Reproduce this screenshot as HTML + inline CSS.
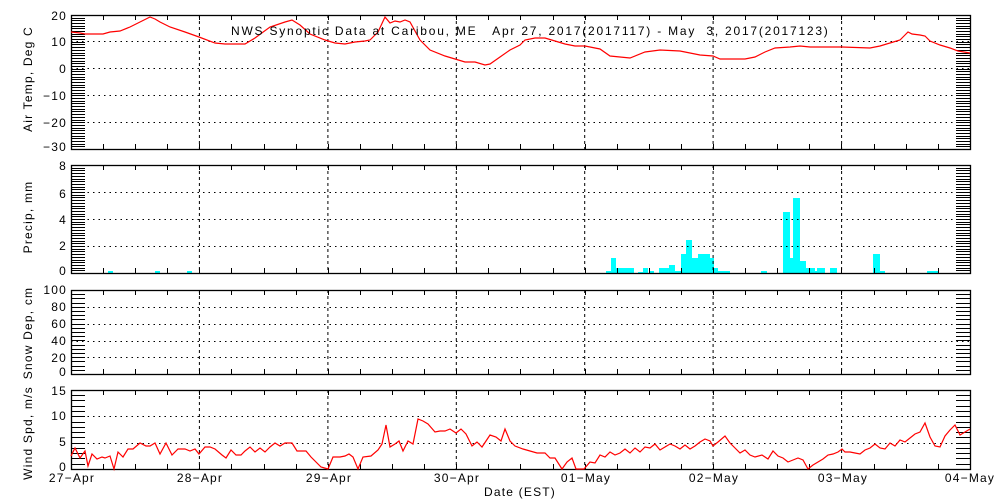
<!DOCTYPE html>
<html><head><meta charset="utf-8"><style>
html,body{margin:0;padding:0;background:#fff;width:1000px;height:500px;overflow:hidden}
svg{display:block}
text{font-family:"Liberation Sans",sans-serif;font-size:12px;fill:#000;letter-spacing:1.2px}
</style></head><body>
<svg id="s" width="1000" height="500" xmlns="http://www.w3.org/2000/svg">
<g id="g"></g>
<text x="231" y="35" xml:space="preserve" font-size="13" textLength="598" lengthAdjust="spacing">NWS Synoptic Data at Caribou, ME   Apr 27, 2017(2017117) - May  3, 2017(2017123)</text>
<g text-anchor="end">
<text x="67" y="20">20</text><text x="67" y="46">10</text><text x="67" y="73">0</text><text x="67" y="100">−10</text><text x="67" y="127">−20</text><text x="67" y="151">−30</text>
<text x="67" y="170">8</text><text x="67" y="198">6</text><text x="67" y="224">4</text><text x="67" y="250">2</text><text x="67" y="275">0</text>
<text x="67" y="294">100</text><text x="67" y="311">80</text><text x="67" y="328">60</text><text x="67" y="345">40</text><text x="67" y="362">20</text><text x="67" y="376">0</text>
<text x="67" y="395">15</text><text x="67" y="420">10</text><text x="67" y="446">5</text><text x="67" y="471">0</text>
</g>
<g text-anchor="middle">
<text x="72" y="482">27−Apr</text><text x="200" y="482">28−Apr</text><text x="329" y="482">29−Apr</text><text x="457" y="482">30−Apr</text><text x="586" y="482">01−May</text><text x="714" y="482">02−May</text><text x="843" y="482">03−May</text><text x="970" y="482">04−May</text>
<text x="520" y="496">Date (EST)</text>
<text transform="translate(32,79) rotate(-90)" letter-spacing="2">Air Temp, Deg C</text>
<text transform="translate(32,217) rotate(-90)" letter-spacing="2">Precip, mm</text>
<text transform="translate(32,333) rotate(-90)" letter-spacing="2">Snow Dep, cm</text>
<text transform="translate(32,433) rotate(-90)" letter-spacing="2">Wind Spd, m/s</text>
</g>
</svg>
<script>
var g=document.getElementById('g'),h='';
function L(x1,y1,x2,y2,extra){h+='<line x1="'+x1+'" y1="'+y1+'" x2="'+x2+'" y2="'+y2+'" stroke="#000" stroke-width="1" '+(extra||'')+'/>';}
var days=[71,199.4,327.9,456.3,584.7,713.1,841.6,970];
function panel(top,bot,minorStep,majors){
  majors.forEach(function(y){L(71,y,970,y,'stroke-dasharray="1.5,4"');});
  for(var i=1;i<7;i++)L(days[i],top,days[i],bot,'stroke-dasharray="3,3"');
  for(var y=bot;y>=top-0.5;y-=minorStep){var yy=Math.round(y)+0.5;L(71,yy,85,yy);L(956,yy,970,yy);}
  for(var x=71;x<=970;x+=32.1){var xx=Math.round(x)+0.5;L(xx,top,xx,top+5);L(xx,bot,xx,bot-5);}
  h+='<rect x="71.5" y="'+(top+0.5)+'" width="899" height="'+(bot-top)+'" fill="none" stroke="#000" stroke-width="1.3"/>';
}
panel(15,149,2.68,[41.5,68.5,95.5,122.5]);
var bars=[[108,113,271],[155,160,271],[187,192,271],[606,611,271],[611,616,258],[616,634,268],[638,643,272],[643,648,268],[650,654,271],[659,669,268],[669,675,265],[675,681,271],[681,686,254],[686,692,240],[692,698,258],[698,710,254],[710,714,258],[714,718,268],[718,730,271],[761,767,271],[783,790,212],[790,793,258],[793,800,198],[800,806,261],[806,815,268],[815,817,271],[817,825,268],[830,837,268],[873,880,254],[880,885,271],[927,938,271]];
bars.forEach(function(b){h+='<rect x="'+b[0]+'" y="'+b[2]+'" width="'+(b[1]-b[0])+'" height="'+(273-b[2])+'" fill="#00ffff"/>';});
panel(165,273,2.7,[192.5,219.5,246.5]);
panel(290,374,4.2,[307.5,324.5,341.5,357.5]);
panel(390,469,5.27,[416.5,443.5]);
var temp="71,32 80,33 85,34 103,34 110,32 120,31 130,27 140,22 150,17 155,19 160,22 170,27 185,32 199,37 215,43 225,44 245,44 255,38 270,27 285,22 292,20 300,25 310,34 325,40 335,43 345,44 355,42 365,41 370,40 378,32 385,17 390,23 395,21 400,22 405,20 410,22 420,40 430,50 445,56 455,59 465,62 475,62 485,65 490,64 500,57 510,50 520,45 525,40 535,38 545,38 555,41 565,44 575,46 585,46 600,49 610,56 630,58 645,52 660,50 680,51 700,55 713,56 720,59 745,59 755,57 765,52 775,48 790,47 800,46 810,47 830,47 842,47 870,48 880,46 890,43 900,40 905,35 908,32 912,34 920,35 925,36 930,41 940,45 950,48 958,51 970,53";
h+='<polyline points="'+temp+'" fill="none" stroke="#ff0000" stroke-width="1.2"/>';
var wind="71,456 75,448 80,458 85,451 88,466 92,454 97,459 102,457 105,458 110,456 114,469 118,452 123,457 128,449 133,449 140,443 146,446 150,446 155,443 160,454 166,443 172,455 178,449 185,449 190,451 195,449 199,454 205,447 210,447 215,449 222,455 226,458 231,450 236,455 241,455 245,451 250,447 255,452 260,448 265,452 270,447 275,443 280,446 285,443 292,443 297,451 306,451 311,457 321,467 328,469 333,457 340,457 345,456 349,454 353,457 358,469 363,457 371,456 378,450 382,444 386,425 390,447 395,444 399,441 403,451 408,441 413,444 418,419 423,421 428,424 435,432 440,431 445,431 450,429 456,433 461,429 466,434 472,446 477,442 482,447 490,435 496,437 501,441 505,429 510,441 515,446 523,449 530,451 537,453 545,453 550,458 555,458 562,469 567,462 572,458 576,469 580,469 584,469 590,462 595,463 600,455 605,457 610,452 615,455 620,453 625,449 630,453 635,448 640,452 645,447 650,448 655,444 660,450 665,447 670,444 675,446 680,449 685,445 690,449 695,446 700,442 705,439 710,441 713,446 718,442 725,436 730,443 735,448 740,453 745,450 750,455 755,457 762,455 768,459 773,451 778,456 783,458 788,462 793,460 798,458 803,460 808,469 813,465 818,462 823,459 828,455 833,454 838,452 842,449 845,452 850,452 855,453 860,454 865,450 870,448 875,444 880,448 885,449 890,443 895,446 900,440 905,442 910,438 915,434 920,432 925,423 930,437 935,446 940,447 945,436 950,430 955,425 960,435 965,432 970,429";
h+='<polyline points="'+wind+'" fill="none" stroke="#ff0000" stroke-width="1.2"/>';
g.innerHTML=h;
</script>
</body></html>
